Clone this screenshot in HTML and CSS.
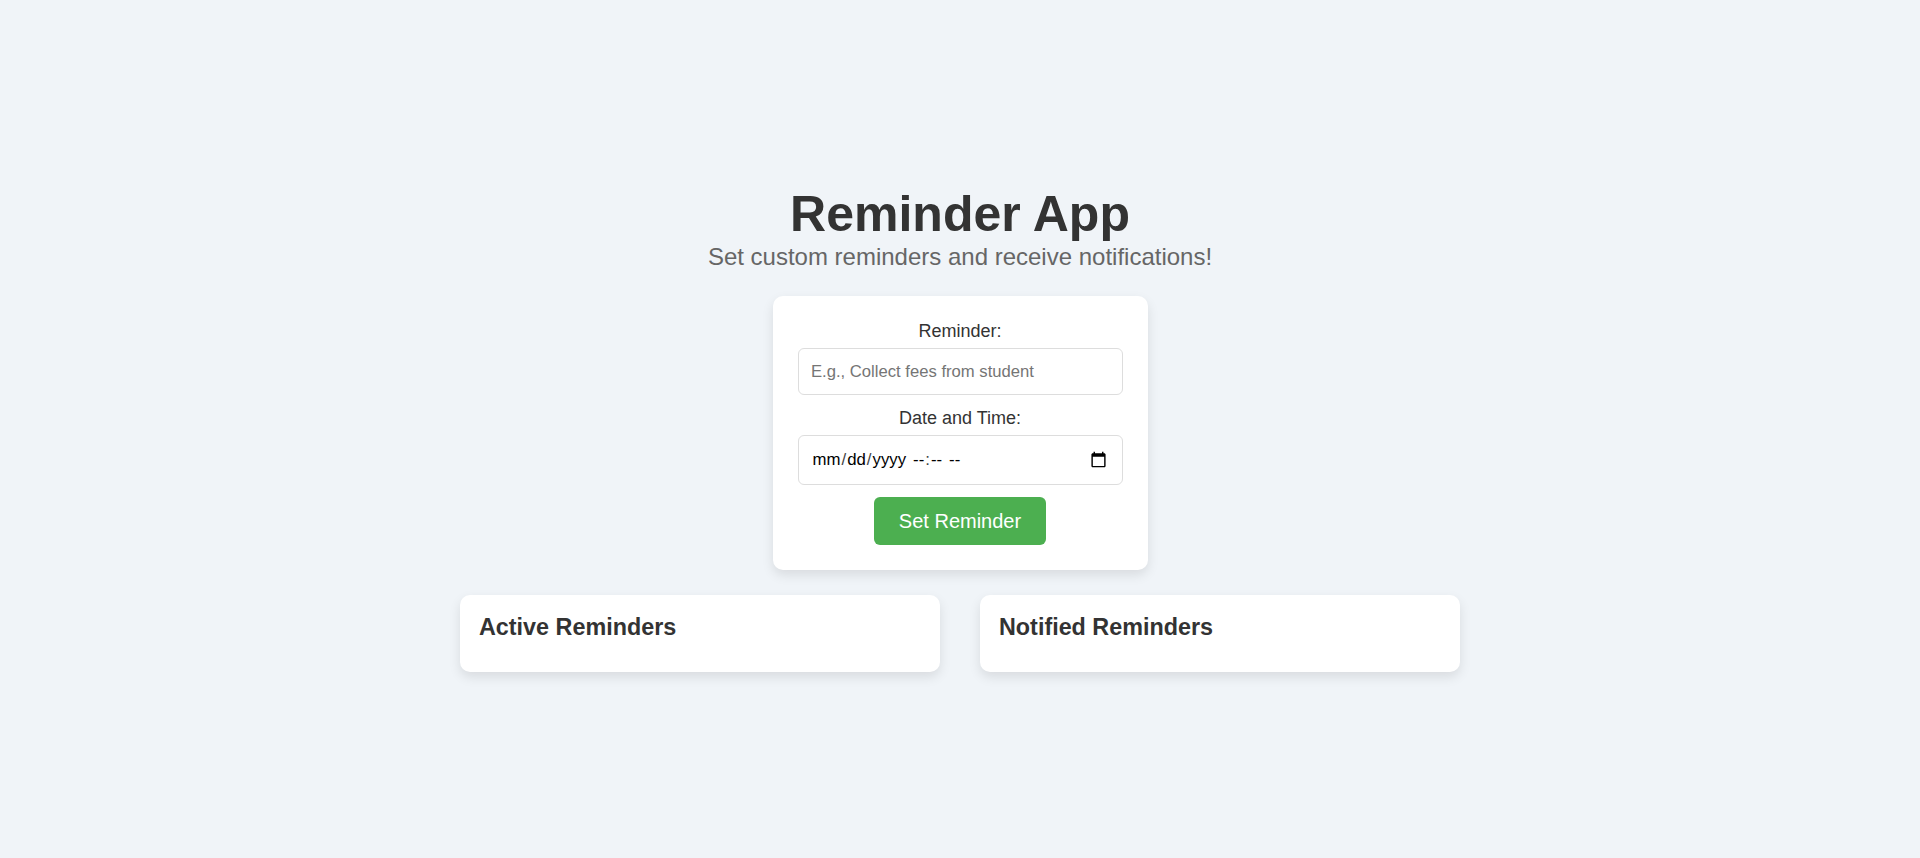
FILE: index.html
```html
<!DOCTYPE html>
<html lang="en">
<head>
<meta charset="UTF-8">
<title>Reminder App</title>
<link rel="stylesheet" href="styles.css">
</head>
<body>
<div class="container">
  <h1 class="title">Reminder App</h1>
  <p class="subtitle">Set custom reminders and receive notifications!</p>
  <div class="form">
    <label class="label" for="text">Reminder:</label>
    <input class="input" type="text" id="text" placeholder="E.g., Collect fees from student">
    <span class="label">Date and Time:</span>
    <div class="input date" tabindex="0">
      <span class="date-part">mm<i class="sep">/</i>dd<i class="sep">/</i>yyyy</span>
      <span class="time-part">--<i class="colon">:</i>--</span>
      <span class="time-part">--</span>
      <svg class="calendar" viewBox="0 0 24 24"><path d="M20 3h-1V1h-2v2H7V1H5v2H4c-1.100 0-2 .9-2 2v16c0 1.100.9 2 2 2h16c1.100 0 2-.9 2-2V5c0-1.100-.9-2-2-2zm0 18H4V8h16v13z"/></svg>
    </div>
    <button class="button">Set Reminder</button>
  </div>
  <div class="lists">
    <section class="card"><h2 class="card-title">Active Reminders</h2></section>
    <section class="card"><h2 class="card-title">Notified Reminders</h2></section>
  </div>
</div>
</body>
</html>
```
FILE: styles.css
```css
* { box-sizing: border-box; margin: 0; padding: 0; }
body {
  font-family: "Liberation Sans", Arial, sans-serif;
  background: #f0f4f8;
  color: #333;
  display: flex;
  justify-content: center;
  align-items: center;
  height: 100vh;
}
.container { width: 1000px; text-align: center; }
.title { font-size: 50px; line-height: 57px; color: #333; }
.subtitle { font-size: 24px; line-height: 27px; color: #666; margin-bottom: 26px; }
.form {
  width: 375px;
  margin: 0 auto 25px;
  padding: 25px;
  background: #fff;
  border-radius: 10px;
  box-shadow: 0 5px 12px rgba(0, 0, 0, 0.1);
}
.label { display: block; font-size: 18px; line-height: 20px; margin-bottom: 7px; }
.input {
  display: block;
  width: 100%;
  height: 47px;
  padding: 12px 12.5px;
  margin-bottom: 13px;
  border: 1px solid #ddd;
  border-radius: 6px;
  font-family: inherit;
  font-size: 16.65px;
}
.date {
  display: flex;
  align-items: center;
  gap: 7px;
  height: 50px;
  margin-bottom: 12px;
  padding: 0 15px 0 14px;
  font-size: 16.8px;
  color: #000;
}
.sep, .colon { font-style: normal; }
.sep { color: #444; padding: 0 1px; }
.colon { padding: 0 1px; color: #444; }
.calendar { width: 17px; height: 17px; margin: 0 0 2px auto; }
.button {
  display: block;
  width: 172px;
  height: 48px;
  margin: 0 auto;
  border: none;
  border-radius: 6px;
  background: #4caf50;
  color: #fff;
  font-family: inherit;
  font-size: 20px;
}
.lists { display: flex; gap: 40px; }
.card {
  flex: 1;
  height: 77px;
  padding: 19px 19px 17px;
  background: #fff;
  border-radius: 10px;
  box-shadow: 0 5px 12px rgba(0, 0, 0, 0.1);
  text-align: left;
}
.card-title { font-size: 23.35px; line-height: 27px; }
```
